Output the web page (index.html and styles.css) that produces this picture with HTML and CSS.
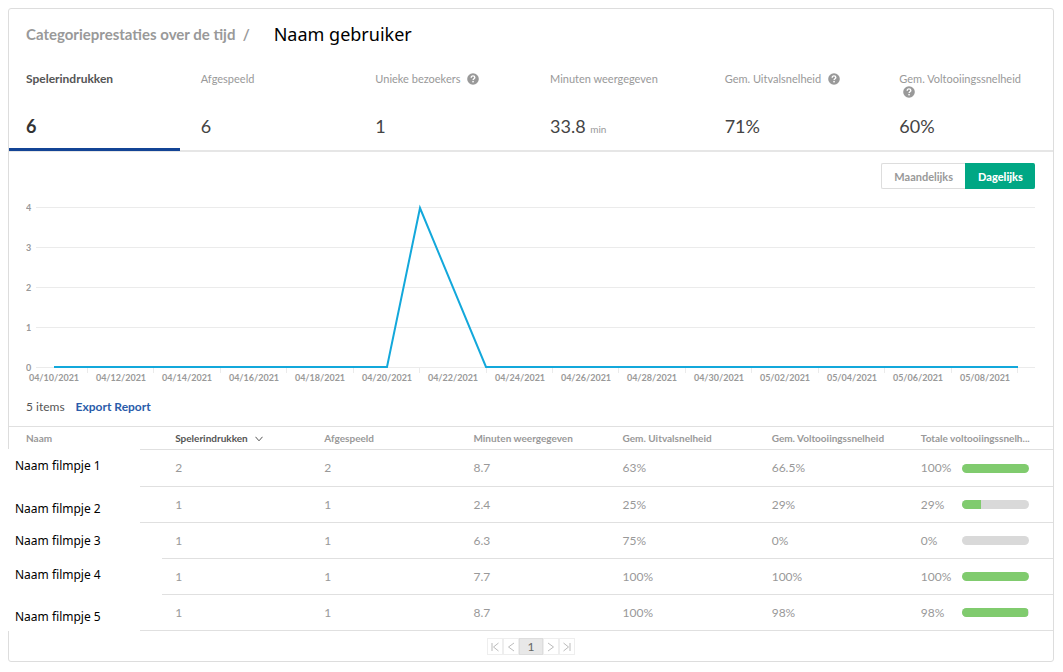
FILE: index.html
```html
<!DOCTYPE html>
<html lang="nl">
<head>
<meta charset="utf-8">
<meta name="viewport" content="width=device-width, initial-scale=1">
<title>Categorieprestaties over de tijd</title>
<link rel="stylesheet" href="styles.css">
</head>
<body>
<svg width="0" height="0" class="defs" aria-hidden="true">
  <symbol id="help" viewBox="0 0 12 12">
    <circle cx="6" cy="6" r="5.8" fill="#999"/>
    <path d="M4.2 4.7C4.2 3.4 5 2.9 6 2.9s1.8.6 1.8 1.6c0 1.2-1.7 1.3-1.7 2.5" fill="none" stroke="#fff" stroke-width="1.4"/>
    <rect x="5.3" y="7.9" width="1.5" height="1.5" fill="#fff"/>
  </symbol>
</svg>
<main class="card">
  <header class="title">
    <h1 class="title-main">Categorieprestaties over de tijd&nbsp; /</h1>
    <span class="title-user">Naam gebruiker</span>
  </header>

  <section class="metrics">
    <button type="button" class="metric active"><span class="metric-label">Spelerindrukken</span><span class="metric-value">6</span></button>
    <button type="button" class="metric"><span class="metric-label">Afgespeeld</span><span class="metric-value">6</span></button>
    <button type="button" class="metric"><span class="metric-label">Unieke bezoekers <svg class="help"><use href="#help"/></svg></span><span class="metric-value">1</span></button>
    <button type="button" class="metric"><span class="metric-label">Minuten weergegeven</span><span class="metric-value">33.8 <small>min</small></span></button>
    <button type="button" class="metric"><span class="metric-label">Gem. Uitvalsnelheid <svg class="help"><use href="#help"/></svg></span><span class="metric-value">71%</span></button>
    <button type="button" class="metric"><span class="metric-label">Gem. Voltooiingssnelheid <svg class="help"><use href="#help"/></svg></span><span class="metric-value">60%</span></button>
  </section>

  <section class="chart">
    <div class="toggle">
      <button type="button" class="toggle-btn">Maandelijks</button>
      <button type="button" class="toggle-btn selected">Dagelijks</button>
    </div>
    <svg class="plot" viewBox="0 0 1009 184">
      <path class="grid" d="M10 7.5H1009M10 47.5H1009M10 87.5H1009M10 127.5H1009M10 167.5H1009"/>
      <path class="grid" d="M61.5 168v5M127.5 168v5M194.5 168v5M260.5 168v5M327.5 168v5M393.5 168v5M460.5 168v5M526.5 168v5M592.5 168v5M659.5 168v5M725.5 168v5M792.5 168v5M858.5 168v5M925.5 168v5M991.5 168v5"/>
      <g class="axis">
        <text x="0" y="11">4</text><text x="0" y="51">3</text><text x="0" y="91">2</text><text x="0" y="131">1</text><text x="0" y="171">0</text>
      </g>
      <g class="axis dates">
        <text x="28" y="181">04/10/2021</text><text x="95" y="181">04/12/2021</text><text x="161" y="181">04/14/2021</text><text x="228" y="181">04/16/2021</text><text x="294" y="181">04/18/2021</text><text x="361" y="181">04/20/2021</text><text x="427" y="181">04/22/2021</text><text x="494" y="181">04/24/2021</text><text x="560" y="181">04/26/2021</text><text x="626" y="181">04/28/2021</text><text x="693" y="181">04/30/2021</text><text x="759" y="181">05/02/2021</text><text x="826" y="181">05/04/2021</text><text x="892" y="181">05/06/2021</text><text x="959" y="181">05/08/2021</text>
      </g>
      <polyline class="series" points="28,167 361,167 394,8 460,167 992,167"/>
    </svg>
  </section>

  <div class="summary"><span>5 items</span><a href="#" class="export">Export Report</a></div>

  <table class="report">
    <thead>
      <tr>
        <th>Naam</th>
        <th class="sorted">Spelerindrukken <svg class="caret" viewBox="0 0 8 6"><path d="M.5 .8L4 4.8L7.500 .8"/></svg></th>
        <th>Afgespeeld</th><th>Minuten weergegeven</th><th>Gem. Uitvalsnelheid</th><th>Gem. Voltooiingssnelheid</th><th>Totale voltooiingssnelh...</th>
      </tr>
    </thead>
    <tbody>
      <tr><td class="name"><span class="name-box first raised">Naam filmpje 1</span></td><td>2</td><td>2</td><td>8.7</td><td>63%</td><td>66.5%</td><td><div class="rate"><span>100%</span><span class="bar"><span class="fill" style="width:100%"></span></span></div></td></tr>
      <tr><td class="name"><span class="name-box lowered">Naam filmpje 2</span></td><td>1</td><td>1</td><td>2.4</td><td>25%</td><td>29%</td><td><div class="rate"><span>29%</span><span class="bar"><span class="fill" style="width:29%"></span></span></div></td></tr>
      <tr><td class="name"><span class="name-box wide">Naam filmpje 3</span></td><td>1</td><td>1</td><td>6.3</td><td>75%</td><td>0%</td><td><div class="rate"><span>0%</span><span class="bar"><span class="fill" style="width:0%"></span></span></div></td></tr>
      <tr><td class="name"><span class="name-box wide raised">Naam filmpje 4</span></td><td>1</td><td>1</td><td>7.7</td><td>100%</td><td>100%</td><td><div class="rate"><span>100%</span><span class="bar"><span class="fill" style="width:100%"></span></span></div></td></tr>
      <tr><td class="name"><span class="name-box lowered">Naam filmpje 5</span></td><td>1</td><td>1</td><td>8.7</td><td>100%</td><td>98%</td><td><div class="rate"><span>98%</span><span class="bar"><span class="fill" style="width:98%"></span></span></div></td></tr>
    </tbody>
  </table>

  <nav class="pager">
    <button type="button" class="page" aria-label="Eerste"><svg viewBox="0 0 8 8"><path d="M1 0V8M7.500 0L2.500 4L7.500 8"/></svg></button>
    <button type="button" class="page" aria-label="Vorige"><svg viewBox="0 0 8 8"><path d="M7 0L1.500 4L7 8"/></svg></button>
    <button type="button" class="page current">1</button>
    <button type="button" class="page" aria-label="Volgende"><svg viewBox="0 0 8 8"><path d="M1 0L6.500 4L1 8"/></svg></button>
    <button type="button" class="page" aria-label="Laatste"><svg viewBox="0 0 8 8"><path d="M7 0V8M.5 0L5.500 4L.5 8"/></svg></button>
  </nav>
</main>
</body>
</html>
```

FILE: styles.css
```css
* { box-sizing: border-box; }
body {
  margin: 0;
  padding: 8px 9px 8px 8px;
  background: #fff;
  color: #999;
  font: 12px/16px Lato, "Open Sans", sans-serif;
}
button { font: inherit; color: inherit; background: none; border: 0; padding: 0; margin: 0; cursor: pointer; }
.defs { position: absolute; }
.card { border: 1px solid #ddd; border-radius: 3px; }

.title { display: flex; align-items: center; gap: 24px; padding: 10px 17px 0; height: 40px; }
.title-main { margin: 0; font-size: 15px; line-height: 24px; font-weight: 700; }
.title-user { font: 18px/24px "Noto Sans", sans-serif; color: #000; }

.metrics { display: grid; grid-template-columns: repeat(6, 1fr); gap: 4px; border-bottom: 2px solid #e6e6e6; padding-top: 13px; }
.metric {
  display: flex; flex-direction: column; align-items: flex-start; justify-content: space-between;
  height: 89px; padding: 10px 17px 11px; margin-bottom: -1px;
  text-align: left; border-bottom: 3px solid transparent;
}
.metric-label { font-size: 11px; line-height: 13px; }
.metric-value { font-size: 18px; line-height: 22px; color: #444; }
.metric-value small { font-size: 10px; line-height: 10px; color: #999; }
.metric.active { border-color: #134495; }
.active .metric-label { font-size: 12px; font-weight: 700; color: #555; }
.active .metric-value { font-weight: 700; color: #333; }
.help { width: 12px; height: 12px; margin-left: 4px; vertical-align: -2px; }

.chart { padding: 11px 18px 0 17px; }
.toggle { display: flex; justify-content: flex-end; height: 26px; }
.toggle-btn { padding: 1px 12px 0; border: 1px solid #ddd; border-right: 0; border-radius: 2px 0 0 2px; font-size: 11px; font-weight: 700; }
.toggle-btn.selected { background: #00a784; border-color: #00a784; color: #fff; border-radius: 0 2px 2px 0; font-weight: 900; }
.plot { display: block; width: 100%; margin-top: 11px; }
.grid { stroke: #ebebeb; stroke-width: 1; fill: none; }
.axis { font-size: 9px; font-weight: 700; fill: #999; }
.dates { text-anchor: middle; }
.series { fill: none; stroke: #13a8db; stroke-width: 2; }

.summary { display: flex; align-items: center; gap: 11px; padding: 5px 17px 1px; height: 42px; color: #555; }
.export { color: #2a5caa; font-weight: 700; text-decoration: none; }

.report { width: 100%; table-layout: fixed; border-collapse: separate; border-spacing: 0; }
.report th {
  height: 24px; padding: 0 17px; border: solid #e0e0e0; border-width: 1px 0;
  font-size: 10px; line-height: 16px; font-weight: 700; text-align: left;
  white-space: nowrap;
}
.report .sorted { color: #555; }
.caret { width: 8px; height: 6px; margin-left: 5px; fill: none; stroke: #555; }
.report td { height: 36px; padding: 0 17px; border-bottom: 1px solid #e0e0e0; }
.report tbody tr:first-child td { height: 37px; }
.report .name { padding: 0; }
.name-box {
  display: flex; align-items: center; position: relative;
  width: 132px; height: 36px; margin: 0 0 -1px -1px; padding-left: 7px;
  background: #fff; color: #000; font: 12px/16px "Noto Sans", sans-serif;
}
.name-box.first { height: 38px; margin-top: -1px; }
.wide { width: 154px; }
.raised { padding-bottom: 4px; }
.lowered { padding-top: 8px; }
.rate { display: grid; grid-template-columns: 41px 1fr; align-items: center; margin-right: 7px; }
.bar { height: 9px; border-radius: 5px; background: #d9d9d9; overflow: hidden; }
.fill { display: block; height: 9px; background: #80cb6e; }

.pager { display: flex; justify-content: center; padding: 7px 0 6px; }
.page { display: flex; align-items: center; justify-content: center; width: 16px; height: 17px; border: 1px solid #eee; color: #666; }
.page svg { width: 8px; height: 8px; fill: none; stroke: #bbb; overflow: visible; }
.page.current { width: 24px; background: #e8e8e8; border-color: #ddd; }
```
